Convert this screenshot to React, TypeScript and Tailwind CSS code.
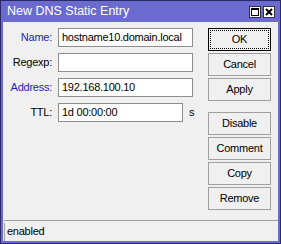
const Field = ({ label, value, blue, w = 'w-[135px]', suffix }: { label: string; value: string; blue?: boolean; w?: string; suffix?: string }) => (
  <div className="flex items-center h-[19px]">
    <span className={`w-[53px] text-right pr-[6px] ${blue ? 'text-[#1c1cc8]' : 'text-black'}`}>{label}</span>
    <div className={`${w} h-[19px] bg-white border border-[#8e8e8e] px-[3px] leading-[17px] text-black`}>{value}</div>
    {suffix && <span className="ml-[6px]">{suffix}</span>}
  </div>
);

const Btn = ({ label, focus }: { label: string; focus?: boolean }) => (
  <button
    className={`w-[63px] h-[23px] bg-[#f0f0f0] text-black leading-none ${
      focus ? 'border border-black outline outline-1 outline-dotted outline-black -outline-offset-[3px]' : 'border border-[#a0a0a0]'
    }`}
  >
    {label}
  </button>
);

export default function App() {
  return (
    <div
      className="w-[281px] h-[244px] bg-[#6b6bcf] border border-[#2a2a6a] flex flex-col text-[11px] tracking-[-0.25px]"
      style={{ fontFamily: '"Liberation Sans", Arial, sans-serif' }}
    >
      <div className="h-[21px] flex items-center pl-[6px] pr-[5px] text-white text-[12.5px] tracking-normal">
        <span className="flex-1">New DNS Static Entry</span>
        <div className="flex gap-[2px]">
          <div className="w-[12px] h-[12px] bg-white border border-[#333] flex items-center justify-center">
            <div className="w-[8px] h-[8px] border border-black border-t-2" />
          </div>
          <div className="w-[12px] h-[12px] bg-white border border-[#333] flex items-center justify-center">
            <svg width="8" height="8" viewBox="0 0 8 8">
              <path d="M1 1 L7 7 M7 1 L1 7" stroke="black" strokeWidth="2" />
            </svg>
          </div>
        </div>
      </div>
      <div className="flex-1 mx-[2px] mb-[2px] bg-[#f0f0f0] flex flex-col">
        <div className="flex flex-1 pt-[6px]">
          <div className="flex flex-col gap-[6px] pl-[2px] w-[205px]">
            <Field label="Name:" value="hostname10.domain.local" blue />
            <Field label="Regexp:" value="" />
            <Field label="Address:" value="192.168.100.10" blue />
            <Field label="TTL:" value="1d 00:00:00" w="w-[125px]" suffix="s" />
          </div>
          <div className="flex flex-col gap-[2px]">
            <Btn label="OK" focus />
            <Btn label="Cancel" />
            <Btn label="Apply" />
            <div className="h-[7px]" />
            <Btn label="Disable" />
            <Btn label="Comment" />
            <Btn label="Copy" />
            <Btn label="Remove" />
          </div>
        </div>
        <div className="h-[21px] border-t border-[#a0a0a0] ml-[1px] flex">
          <div className="border-l border-[#a0a0a0] mt-[2px] pl-[2px] leading-[16px]">enabled</div>
        </div>
      </div>
    </div>
  );
}
